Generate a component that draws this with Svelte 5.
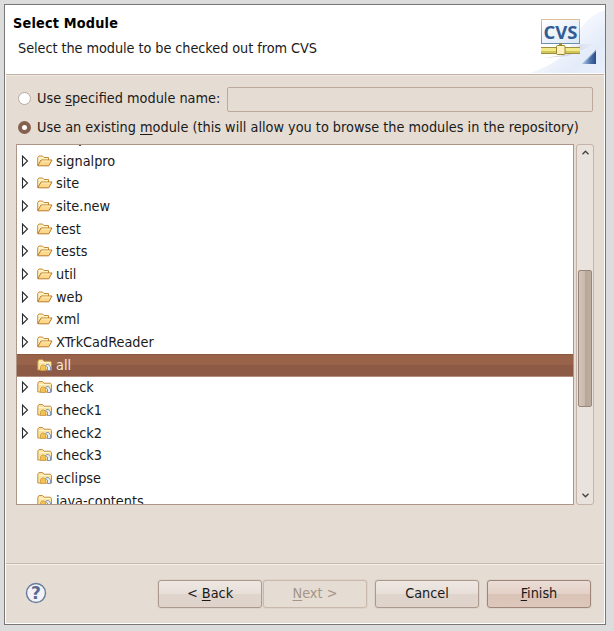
<script>
  const rows = [
    ['signalpro', 'folder', true],
    ['site', 'folder', true],
    ['site.new', 'folder', true],
    ['test', 'folder', true],
    ['tests', 'folder', true],
    ['util', 'folder', true],
    ['web', 'folder', true],
    ['xml', 'folder', true],
    ['XTrkCadReader', 'folder', true],
    ['all', 'module', false],
    ['check', 'module', true],
    ['check1', 'module', true],
    ['check2', 'module', true],
    ['check3', 'module', false],
    ['eclipse', 'module', false],
    ['java-contents', 'module', false]
  ];
  let selected = $state('all');
  let mode = $state('existing');
</script>

<div class="desktop">
  <div class="window">
    <header>
      <div class="titles">
        <h1>Select Module</h1>
        <p>Select the module to be checked out from CVS</p>
      </div>
      <svg class="banner" width="75" height="68" viewBox="530 5 75 68">
        <defs>
          <linearGradient id="sky" x1="0" y1="0" x2="1" y2="1"><stop offset=".3" stop-color="#fdfdff" /><stop offset=".75" stop-color="#e3ebf9" /><stop offset="1" stop-color="#e9effb" /></linearGradient>
          <linearGradient id="card" x1="0" y1="0" x2="1" y2="1"><stop offset="0" stop-color="#fff" /><stop offset="1" stop-color="#dbe6f6" /></linearGradient>
          <linearGradient id="rim" x1="0" y1="0" x2="0" y2="1"><stop offset="0" stop-color="#ddbf95" /><stop offset="1" stop-color="#6d8fae" /></linearGradient>
          <linearGradient id="tri" x1="0" y1="0" x2="1" y2="0"><stop offset="0" stop-color="#b7cbe6" /><stop offset=".6" stop-color="#4d73ab" /><stop offset="1" stop-color="#254b86" /></linearGradient>
          <linearGradient id="shade" x1="0" y1="0" x2="1" y2="0"><stop offset="0" stop-color="#8d86a0" stop-opacity=".45" /><stop offset="1" stop-color="#8d86a0" stop-opacity="0" /></linearGradient>
        </defs>
        <path d="M605 10v63h-75c24-8 34-17 42-30 9-18 18-28 33-33z" fill="url(#sky)" />
        <path d="M544 58l24-2 28-12-16 0-10 10z" fill="url(#shade)" />
        <rect x="541.500" y="19.500" width="38" height="24" fill="url(#card)" stroke="url(#rim)" />
        <text x="543.500" y="38.500" textLength="34" lengthAdjust="spacingAndGlyphs">CVS</text>
        <path d="M541 47.500h39M541 53.500h39" stroke="#9d9140" />
        <path d="M541 49.500h39" stroke="#f3ea8c" stroke-width="3" />
        <path d="M541 52h39" stroke="#d3c557" stroke-width="2" />
        <path d="M560.500 43v3" stroke="#9a8530" stroke-width="3" />
        <rect x="556.500" y="45.500" width="8.500" height="9" rx="1" fill="#fff0bd" stroke="#9a8530" />
        <path d="M596 50v14h-14z" fill="url(#tri)" />
        <path d="M583 63.500L595.500 51" fill="none" stroke="#a8c0df" />
      </svg>
    </header>

    <main>
      <div class="choice first">
        <button class="radio" class:on={mode === 'named'} aria-label="Use specified module name" onclick={() => (mode = 'named')}></button>
        <span class="label">Use <u>s</u>pecified module name:</span>
        <div class="field"></div>
      </div>
      <div class="choice second">
        <button class="radio" class:on={mode === 'existing'} aria-label="Use an existing module" onclick={() => (mode = 'existing')}></button>
        <span class="label">Use an existing <u>m</u>odule (this will allow you to browse the modules in the repository)</span>
      </div>
      <div class="browser">
        <div class="tree">
          {#each rows as [name, kind, expandable]}
            <button class="row" class:selected={selected === name} onclick={() => (selected = name)}>
              <svg class="arrow" width="8" height="12" viewBox="0 0 8 12">
                {#if expandable}<path d="M1.500 1v10l5-5z" fill="#fff" stroke="#2c2c2c" stroke-width="1.100" />{/if}
              </svg>
              <svg class="icon" width="16" height="14" viewBox="0 0 16 14">
                {#if kind === 'folder'}
                  <path d="M.7 11.500V3.500L2 2h3.500L7 3.500h4.500V6" fill="#fff3c4" stroke="#c58a35" />
                  <path d="M.8 11.800L4 6h11l-3.200 5.800z" fill="#fcd98a" stroke="#b9792a" stroke-linejoin="round" />
                  <path d="M4.600 7h8.800" stroke="#fff1bd" />
                {:else}
                  <path d="M.8 12V3.200L2 1.500h3.500L7 3.200h6.500l1 1.300V12z" fill="#fbe3a0" stroke="#c58f43" stroke-linejoin="round" />
                  <path d="M2 4.500h11" stroke="#fff6d2" />
                  <path d="M3.500 12.500V8.500l1.500-1.500h2l1.500 1.500v4z" fill="#f5c24f" stroke="#c99a4a" stroke-width=".8" />
                  <path d="M8.500 7.500l1.500-1h1.500l2 2.500v3.500h-3V9z" fill="#e8f0ff" stroke="#6d83ab" stroke-width=".8" />
                {/if}
              </svg>
              <span class="name">{name}</span>
            </button>
          {/each}
        </div>
        <div class="scroll">
          <svg width="7" height="5" viewBox="0 0 7 5"><path d="M.5 4.300l3-3 3 3" fill="none" stroke="#444" stroke-width="1.400" /></svg>
          <div class="thumb"></div>
          <svg width="7" height="5" viewBox="0 0 7 5"><path d="M.5 .7l3 3 3-3" fill="none" stroke="#444" stroke-width="1.400" /></svg>
        </div>
      </div>
    </main>

    <footer>
      <svg class="help" width="22" height="22" viewBox="0 0 22 22">
        <circle cx="11" cy="11" r="9.500" fill="#f3f3f5" stroke="#687b9c" stroke-width="1.400" />
        <text x="11" y="17" text-anchor="middle">?</text>
      </svg>
      <button class="btn back"><span>&lt; <u>B</u>ack</span></button>
      <button class="btn next" disabled><span><u>N</u>ext &gt;</span></button>
      <button class="btn cancel"><span>Cancel</span></button>
      <button class="btn finish"><span><u>F</u>inish</span></button>
    </footer>
  </div>
</div>

<style>
  .desktop { box-sizing: border-box; width: 614px; height: 631px; padding: 4px 8px 6px 4px; background: #dcdcdc; font: 14.330px/16px 'DejaVu Sans Condensed', 'DejaVu Sans', sans-serif; color: #1a1a1a; overflow: hidden; }
  .window { box-sizing: border-box; width: 602px; height: 621px; display: flex; flex-direction: column; border: 1px solid #777; background: #e5dcd3; box-shadow: inset 0 0 0 1px #fff; }
  header { box-sizing: border-box; height: 70px; display: flex; justify-content: space-between; background: #fff; border-bottom: 1px solid #bfafa5; margin: 0 1px; }
  h1 { margin: 10px 0 0 7px; font-size: 14.330px; line-height: 16px; letter-spacing: .18px; color: #000; }
  p { margin: 9px 0 0 12px; letter-spacing: -.06px; }
  .banner { flex: none; margin-right: -1px; }
  .banner text { font: bold 18.500px 'Open Sans', sans-serif; fill: #315b92; }
  main { flex: none; height: 489px; box-sizing: border-box; padding: 12px 11px 0; margin: 0 1px; border-bottom: 1px solid #c8b8ac; box-shadow: inset 0 1px #f0e9e2; }
  .choice { display: flex; align-items: center; }
  .first { height: 24px; }
  .second { height: 33px; }
  .label { margin-top: -1px; white-space: nowrap; }
  .first .label { margin-top: -3px; }
  .first .radio { margin-top: -1px; }
  u { text-underline-offset: 2px; text-decoration-thickness: 1px; }
  .radio { box-sizing: border-box; width: 13px; height: 13px; flex: none; margin: 0 6px 0 1px; padding: 0; border: 1px solid #b8aaa0; border-radius: 50%; background: #fff; }
  .radio.on { border: 4px solid #85604f; }
  .field { box-sizing: border-box; width: 366px; height: 25px; margin-left: auto; border: 1px solid #bba99c; border-radius: 2px; }
  .browser { display: flex; gap: 2px; height: 361px; margin: 0 -1px; }
  .tree { position: relative; box-sizing: border-box; width: 558px; padding-top: 5px; border: 1px solid #ad9688; background: #fff; overflow: hidden; }
  /* foot of the descender of the row scrolled just above the list */
  .tree::before { content: ''; position: absolute; left: 62px; top: 0; width: 2px; height: 1px; background: #555; }
  .row { box-sizing: border-box; width: 100%; height: 22.670px; display: flex; align-items: center; padding: 0 0 1px 4px; border: 0; background: none; font: inherit; color: inherit; }
  .selected { background: linear-gradient(#99634a 50%, #8d5b45 50%); box-shadow: inset 0 1px #8c573f, inset 0 -1px #b38c7a; color: #f5e8df; }
  .arrow { margin-right: 8px; }
  .icon { margin-right: 3px; }
  .scroll { box-sizing: border-box; width: 18px; display: flex; flex-direction: column; align-items: center; border: 1px solid #c5b3a7; border-radius: 3px; background: #eae2dc; padding: 5px 0 6px; }
  .thumb { box-sizing: border-box; flex: none; width: 14px; height: 137px; margin: 115px 0 auto; border: 1px solid #98867a; border-radius: 2px; background: linear-gradient(90deg, #d1c4b9, #c7b9ac 50%, #b8a797 51%, #bcaea0); }
  footer { display: flex; align-items: center; flex: 1; box-shadow: inset 0 1px #f6efe7; margin: 0 1px 1px; }
  .help { margin: -2px 111px 0 19px; }
  .help text { font: bold 17px 'DejaVu Sans', sans-serif; fill: #556a94; }
  .btn { box-sizing: border-box; width: 104px; height: 28px; padding: 0 0 1px; border: 1px solid #ab998e; border-radius: 3px; background: linear-gradient(#eee7e2, #e8dfd9 48%, #e0d5cd 50%, #dfd3cb); font: inherit; color: #1a1a1a; box-shadow: 0 0 0 1px #ded3c9; }
  .next { border-color: #c9b9ad; background: #e5dcd3; color: #a49587; margin: 0 8px 0 1px; }
  .cancel { margin-right: 8px; }
  .finish { background: linear-gradient(#eaddd6, #e4d1c7 48%, #dac2b6 50%, #ddc7bc); border-color: #9f8679; }
</style>
